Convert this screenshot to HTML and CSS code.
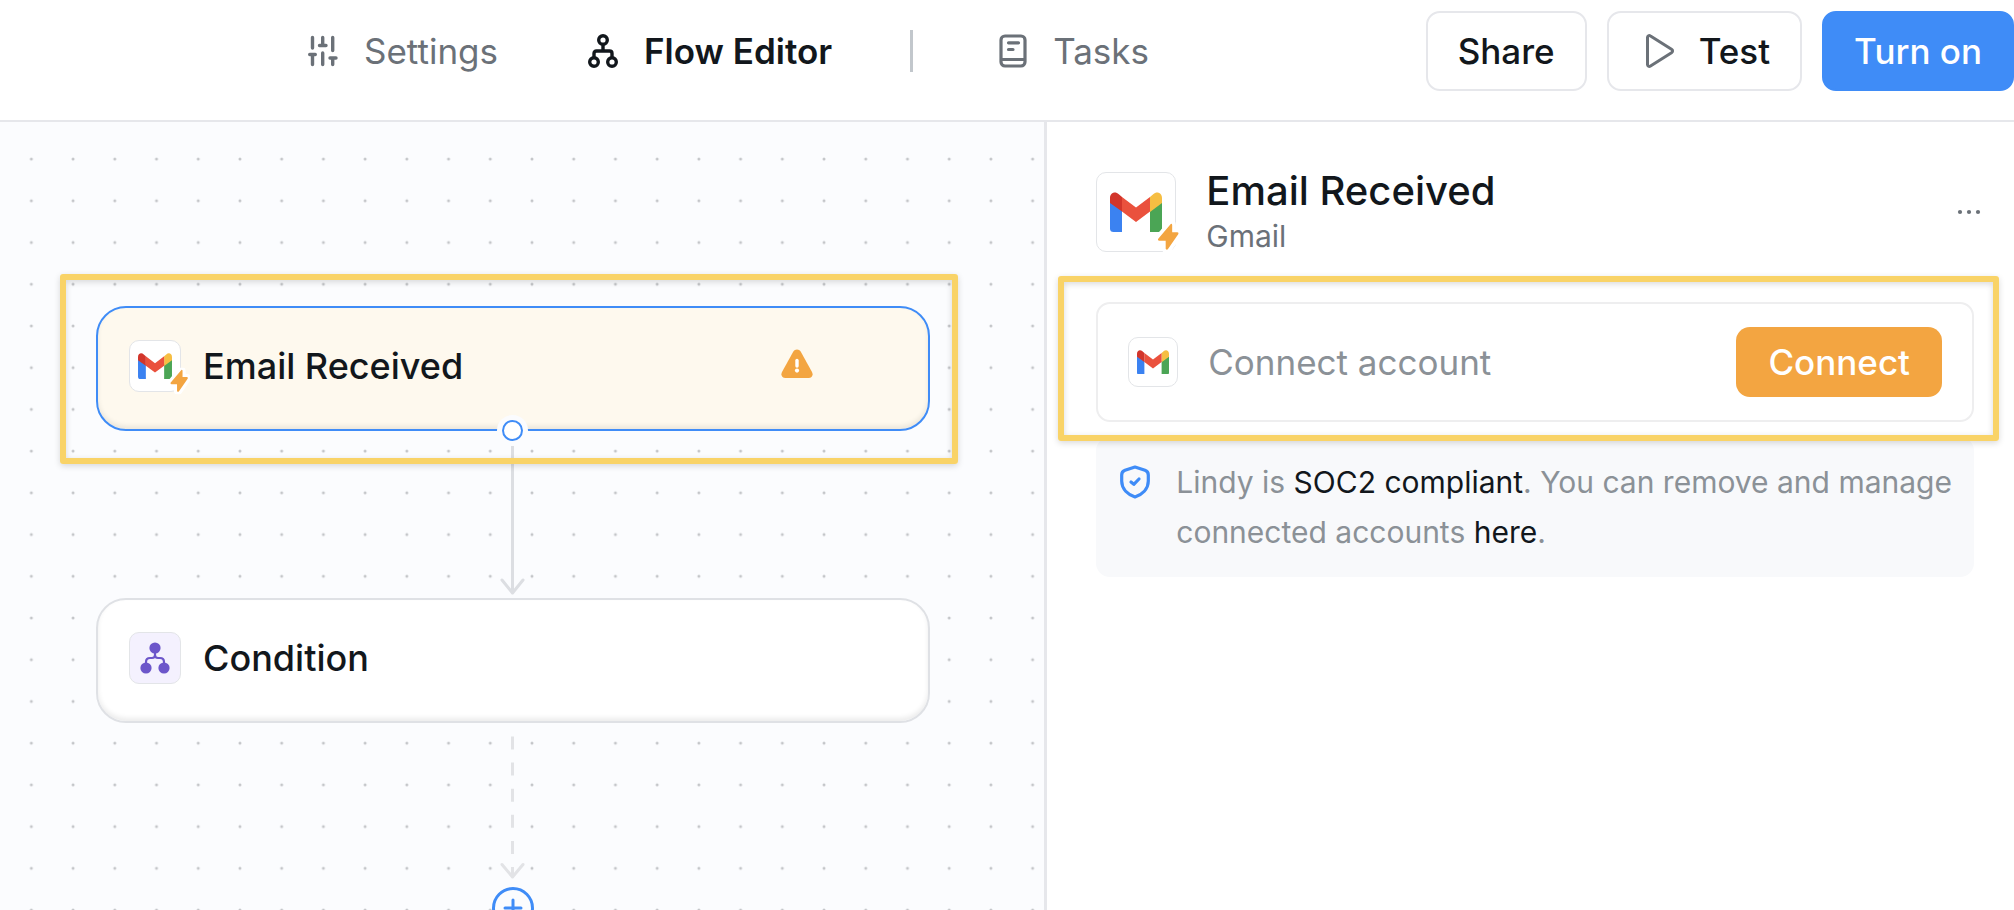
FILE: index.html
```
<!DOCTYPE html>
<html lang="en">
<head>
    <meta charset="UTF-8">
    <meta name="viewport" content="width=device-width, initial-scale=1.0">
    <title>Flow Editor</title>
    <link rel="stylesheet" href="styles.css">
</head>
<body>
    <!-- shared icons -->
    <svg class="defs" width="0" height="0" aria-hidden="true">
        <symbol id="gmail" viewBox="0 0 52 40">
            <path fill="#3b82f1" d="M0 10L12 18V40H3.500A3.500 3.500 0 0 1 0 36.500Z"/>
            <path fill="#4ba555" d="M52 10L40 18V40H48.500A3.500 3.500 0 0 0 52 36.500Z"/>
            <path fill="#f6be42" d="M40 5L43.200 2.200C47 -1.200 52 1 52 6V11L40 20Z"/>
            <path fill="#ea513d" d="M12 5L26 15.500L40 5V19.500L26 30L12 19.500Z"/>
            <path fill="#d2352b" d="M0 11V6C0 1 5 -1.200 8.800 2.200L12 5V19.500Z"/>
        </symbol>
        <symbol id="bolt" viewBox="0 0 28 34">
            <path d="M16.500 3.500C17.300 2.400 18.500 2.700 18.500 4V12H24C25.200 12 25.600 13 25 14L14 30C13.200 31.200 11.500 30.800 11.500 29.500V21H4.500C3.300 21 2.800 20 3.500 19Z"/>
        </symbol>
    </svg>

    <header id="topbar">
        <nav id="tabs">
            <a href="#settings" class="tab">
                <svg width="30" height="32" viewBox="0 0 30 32" fill="none" stroke="currentColor" stroke-width="3.400" stroke-linecap="round">
                    <path d="M4.500 2.500V13M1.700 19.500H7.300M4.500 20V29.500M14.700 2.500V10M11.500 10.500H18M14.700 18V29.500M24.700 2.500V15.500M22 23H28M24.700 23.500V29.500"/>
                </svg>
                Settings
            </a>
            <a href="#flow" class="tab active">
                <svg width="30" height="34" viewBox="0 0 30 34" fill="none" stroke="currentColor" stroke-width="3.400">
                    <circle cx="15" cy="6" r="4.300"/>
                    <circle cx="6" cy="28" r="4.300"/>
                    <circle cx="24" cy="28" r="4.300"/>
                    <path d="M15 10.500V17M6 23.500V19.500Q6 17 8.500 17H21.500Q24 17 24 19.500V23.500"/>
                </svg>
                Flow Editor
            </a>
            <span class="divider"></span>
            <a href="#tasks" class="tab">
                <svg width="28" height="34" viewBox="0 0 28 34" fill="none" stroke="currentColor" stroke-width="3.200" stroke-linecap="round">
                    <rect x="2" y="2" width="24" height="30" rx="4"/>
                    <path d="M2.500 25.500H25.500M9.500 8.800H19.500M9.500 15.500H14"/>
                </svg>
                Tasks
            </a>
        </nav>
        <div id="actions">
            <button type="button" class="btn">Share</button>
            <button type="button" class="btn btn-test">
                <svg width="30" height="36" viewBox="0 0 30 36" fill="none" stroke="#6b7178" stroke-width="3" stroke-linejoin="round">
                    <path d="M2.500 4.500C2.500 2.800 4 2 5.500 3L26.500 16.300C28 17.300 28 18.700 26.500 19.700L5.500 33C4 34 2.500 33.200 2.500 31.500Z"/>
                </svg>
                Test
            </button>
            <button type="button" class="btn btn-primary">Turn on</button>
        </div>
    </header>

    <main id="editor">
        <section id="canvas">
            <svg id="edges" width="100%" height="100%">
                <defs>
                    <pattern id="dots" x="10.500" y="16.200" width="41.720" height="41.720" patternUnits="userSpaceOnUse">
                        <circle cx="20.860" cy="20.860" r="1.500" fill="#c3c5c8"/>
                    </pattern>
                </defs>
                <rect width="100%" height="100%" fill="url(#dots)"/>
                <g fill="none" stroke="#dcdee2" stroke-width="3" stroke-linecap="round" stroke-linejoin="round">
                    <path stroke-linecap="butt" d="M512.500 324V470"/>
                    <path d="M502 458L512.500 471L523 458"/>
                </g>
                <g fill="none" stroke="#e2e3e6" stroke-width="3" stroke-linecap="round" stroke-linejoin="round">
                    <path stroke-linecap="butt" stroke-dasharray="13 13.100" d="M512.500 614.500V755"/>
                    <path d="M502 742.500L512.500 755L523 742.500"/>
                </g>
            </svg>

            <div class="node node-trigger">
                <span class="app-icon">
                    <svg class="logo" viewBox="0 0 52 40"><use href="#gmail"/></svg>
                    <svg class="bolt bolt-outline" viewBox="0 0 28 34"><use href="#bolt"/></svg>
                </span>
                <span class="node-name">Email Received</span>
                <svg class="warning" width="32" height="30" viewBox="0 0 32 30">
                    <path fill="#f3a541" d="M12.200 2.800C14 -.2 18 -.2 19.800 2.800L31 23C32.500 26 31 29 27.500 29H4.500C1 29 -.5 26 1 23Z"/>
                    <path stroke="#fff" stroke-width="3.400" stroke-linecap="round" d="M16 11.500V17"/>
                    <circle cx="16" cy="21.600" r="2.100" fill="#fff"/>
                </svg>
                <span class="handle"></span>
            </div>

            <div class="node node-condition">
                <span class="app-icon branch">
                    <svg width="30" height="32" viewBox="0 0 30 32">
                        <path fill="none" stroke="#6c56ca" stroke-width="2.200" d="M15 8V13Q15 16 12 16H10Q6 16 6 20V25M15 13Q15 16 18 16H20Q24 16 24 20V25"/>
                        <g fill="#6c56ca">
                            <circle cx="15" cy="6" r="5.600"/>
                            <circle cx="6" cy="26" r="5.600"/>
                            <circle cx="24" cy="26" r="5.600"/>
                        </g>
                    </svg>
                </span>
                <span class="node-name">Condition</span>
            </div>

            <button type="button" class="add-step" aria-label="Add step">
                <svg width="20" height="20" viewBox="0 0 20 20" stroke="#3f8cf7" stroke-width="3" stroke-linecap="round">
                    <path d="M10 2V18M2 10H18"/>
                </svg>
            </button>

            <div class="highlight highlight-node"></div>
        </section>

        <aside id="panel">
            <div class="panel-head">
                <span class="app-icon app-icon-lg">
                    <svg class="logo" viewBox="0 0 52 40"><use href="#gmail"/></svg>
                    <svg class="bolt bolt-outline" viewBox="0 0 28 34"><use href="#bolt"/></svg>
                </span>
                <div class="panel-title">
                    <h2>Email Received</h2>
                    <p>Gmail</p>
                </div>
                <button type="button" class="more" aria-label="More">
                    <svg width="24" height="6" viewBox="0 0 24 6" fill="#6b7178">
                        <circle cx="3" cy="3" r="2.100"/>
                        <circle cx="12" cy="3" r="2.100"/>
                        <circle cx="21" cy="3" r="2.100"/>
                    </svg>
                </button>
            </div>

            <div class="connect-wrap">
                <div class="connect">
                    <span class="app-icon app-icon-sm">
                        <svg class="logo" viewBox="0 0 52 40"><use href="#gmail"/></svg>
                    </span>
                    <span class="connect-label">Connect account</span>
                    <button type="button" class="btn-connect">Connect</button>
                </div>
                <div class="highlight highlight-connect"></div>
            </div>

            <div class="notice">
                <svg width="30" height="34" viewBox="0 0 30 34" fill="none" stroke="#3f8cf7" stroke-width="3.200" stroke-linecap="round" stroke-linejoin="round">
                    <path d="M15 2L25 5.300Q28.300 6.500 28.300 10V16C28.300 24 22 29.500 15 32C8 29.500 1.700 24 1.700 16V10Q1.700 6.500 5 5.300Z"/>
                    <path d="M11 17L13.800 19.300L19 14"/>
                </svg>
                <p>Lindy is <a href="#soc2">SOC2 compliant</a>. You can remove and manage connected accounts <a href="#accounts">here</a>.</p>
            </div>
        </aside>
    </main>
</body>
</html>
```
FILE: styles.css
```
* {
    margin: 0;
    padding: 0;
    box-sizing: border-box;
}

body {
    height: 100vh;
    display: flex;
    flex-direction: column;
    overflow: hidden;
    background: #fff;
    color: #12171c;
    font-family: Inter, "Liberation Sans", sans-serif;
    font-size: 35px;
    line-height: 44px;
}

a {
    color: inherit;
    text-decoration: none;
}

button {
    font: inherit;
    color: inherit;
    background: none;
    border: none;
    cursor: pointer;
}

svg {
    flex-shrink: 0;
}

.defs {
    position: absolute;
}

/* top bar */
#topbar {
    display: flex;
    justify-content: space-between;
    padding: 11px 0 29px 308px;
    border-bottom: 2px solid #e6e7eb;
}

#tabs {
    display: flex;
    align-items: center;
}

.tab {
    display: flex;
    align-items: center;
    gap: 26px;
    margin-right: 90px;
    color: #6b7178;
}

.tab.active {
    margin-right: 78px;
    color: #12171c;
    font-weight: 600;
}

.divider {
    width: 3px;
    height: 42px;
    margin-right: 86px;
    background: #c2c7cc;
}

#actions {
    display: flex;
    gap: 20px;
}

.btn {
    display: flex;
    align-items: center;
    height: 80px;
    padding: 0 30px;
    border: 2px solid #e6e7eb;
    border-radius: 14px;
    font-weight: 500;
    white-space: nowrap;
}

.btn-test {
    gap: 24px;
    padding-left: 36px;
}

.btn-primary {
    border-color: #3f8cf7;
    background: #3f8cf7;
    color: #fff;
}

/* editor */
#editor {
    flex: 1;
    display: grid;
    grid-template-columns: 52% 1fr;
}

#canvas {
    position: relative;
    overflow: hidden;
    border-right: 3px solid #e6e7eb;
    background: #fbfcfe;
}

#edges {
    position: absolute;
    top: 0;
    left: 0;
}

.node {
    position: absolute;
    left: 96px;
    width: 834px;
    height: 125px;
    display: flex;
    align-items: center;
    gap: 22px;
    padding: 0 31px 5px;
    border: 2px solid #dfe1e5;
    border-radius: 30px;
    background: #fff;
    box-shadow: inset 0 -3px 5px rgba(0, 0, 0, 0.08);
    font-size: 36px;
    font-weight: 500;
}

.node-trigger {
    top: 184px;
    border-color: #3f8cf7;
    background: #fef9ee;
}

.node-condition {
    top: 476px;
}

.warning {
    margin: 0 84px 4px auto;
}

.handle {
    position: absolute;
    left: 50%;
    bottom: -12px;
    width: 21px;
    height: 21px;
    margin-left: -11px;
    border: 2px solid #3f8cf7;
    border-radius: 50%;
    background: #fff;
    box-shadow: 0 0 0 5px #fbfcfe;
}

.add-step {
    position: absolute;
    left: 492px;
    top: 765px;
    width: 42px;
    height: 42px;
    display: flex;
    align-items: center;
    justify-content: center;
    border: 3px solid #3f8cf7;
    border-radius: 50%;
    background: #fbfcfe;
}

.highlight {
    position: absolute;
    border: 6px solid #f9d367;
    border-radius: 3px;
    box-shadow: 0 2px 6px rgba(0, 0, 0, 0.15), inset 0 2px 6px rgba(0, 0, 0, 0.15);
    pointer-events: none;
}

.highlight-node {
    left: 60px;
    top: 152px;
    width: 898px;
    height: 190px;
}

.highlight-connect {
    inset: -26px -25px -19px -38px;
}

/* app icons */
.app-icon {
    position: relative;
    flex-shrink: 0;
    width: 52px;
    height: 52px;
    display: flex;
    align-items: center;
    justify-content: center;
    border: 1px solid #e3e5e8;
    border-radius: 10px;
    background: #fff;
}

.app-icon .logo {
    width: 34px;
}

.app-icon-lg {
    width: 80px;
    height: 80px;
}

.app-icon-lg .logo {
    width: 52px;
}

.app-icon-sm {
    width: 50px;
    height: 50px;
}

.app-icon-sm .logo {
    width: 32px;
}

.branch {
    background: #f4f1fe;
}

.bolt {
    position: absolute;
    right: -10px;
    bottom: -4px;
    width: 22px;
    height: 28px;
    overflow: visible;
    fill: #f3a541;
}

.bolt-outline {
    stroke: #fff;
    stroke-width: 8px;
    stroke-linejoin: round;
    paint-order: stroke;
}

.app-icon-lg .bolt {
    right: -6px;
    bottom: -2px;
    width: 26px;
    height: 32px;
}

/* right panel */
#panel {
    padding: 45px 40px 40px 49px;
}

.panel-head {
    display: flex;
    align-items: center;
    gap: 30px;
    margin-bottom: 45px;
}

.panel-title h2 {
    font-size: 40px;
    line-height: 48px;
    font-weight: 500;
}

.panel-title p {
    font-size: 30px;
    line-height: 42px;
    color: #6b7178;
}

.more {
    display: flex;
    align-items: center;
    height: 40px;
    margin-left: auto;
    margin-right: -7px;
}

.connect-wrap {
    position: relative;
    margin-bottom: 15px;
}

.connect {
    display: flex;
    align-items: center;
    gap: 30px;
    height: 120px;
    padding: 0 30px;
    border: 2px solid #eeeeef;
    border-radius: 14px;
}

.connect-label {
    color: #8b9197;
}

.btn-connect {
    height: 70px;
    margin-left: auto;
    padding: 0 32px;
    border-radius: 14px;
    background: #f3a541;
    color: #fff;
    font-weight: 500;
}

.notice {
    display: flex;
    gap: 26px;
    padding: 20px 16px 20px 24px;
    border-radius: 14px;
    background: #f8f9fb;
    color: #8b9197;
    font-size: 30px;
    line-height: 50px;
}

.notice svg {
    margin-top: 8px;
}

.notice a {
    color: #12171c;
}
```
